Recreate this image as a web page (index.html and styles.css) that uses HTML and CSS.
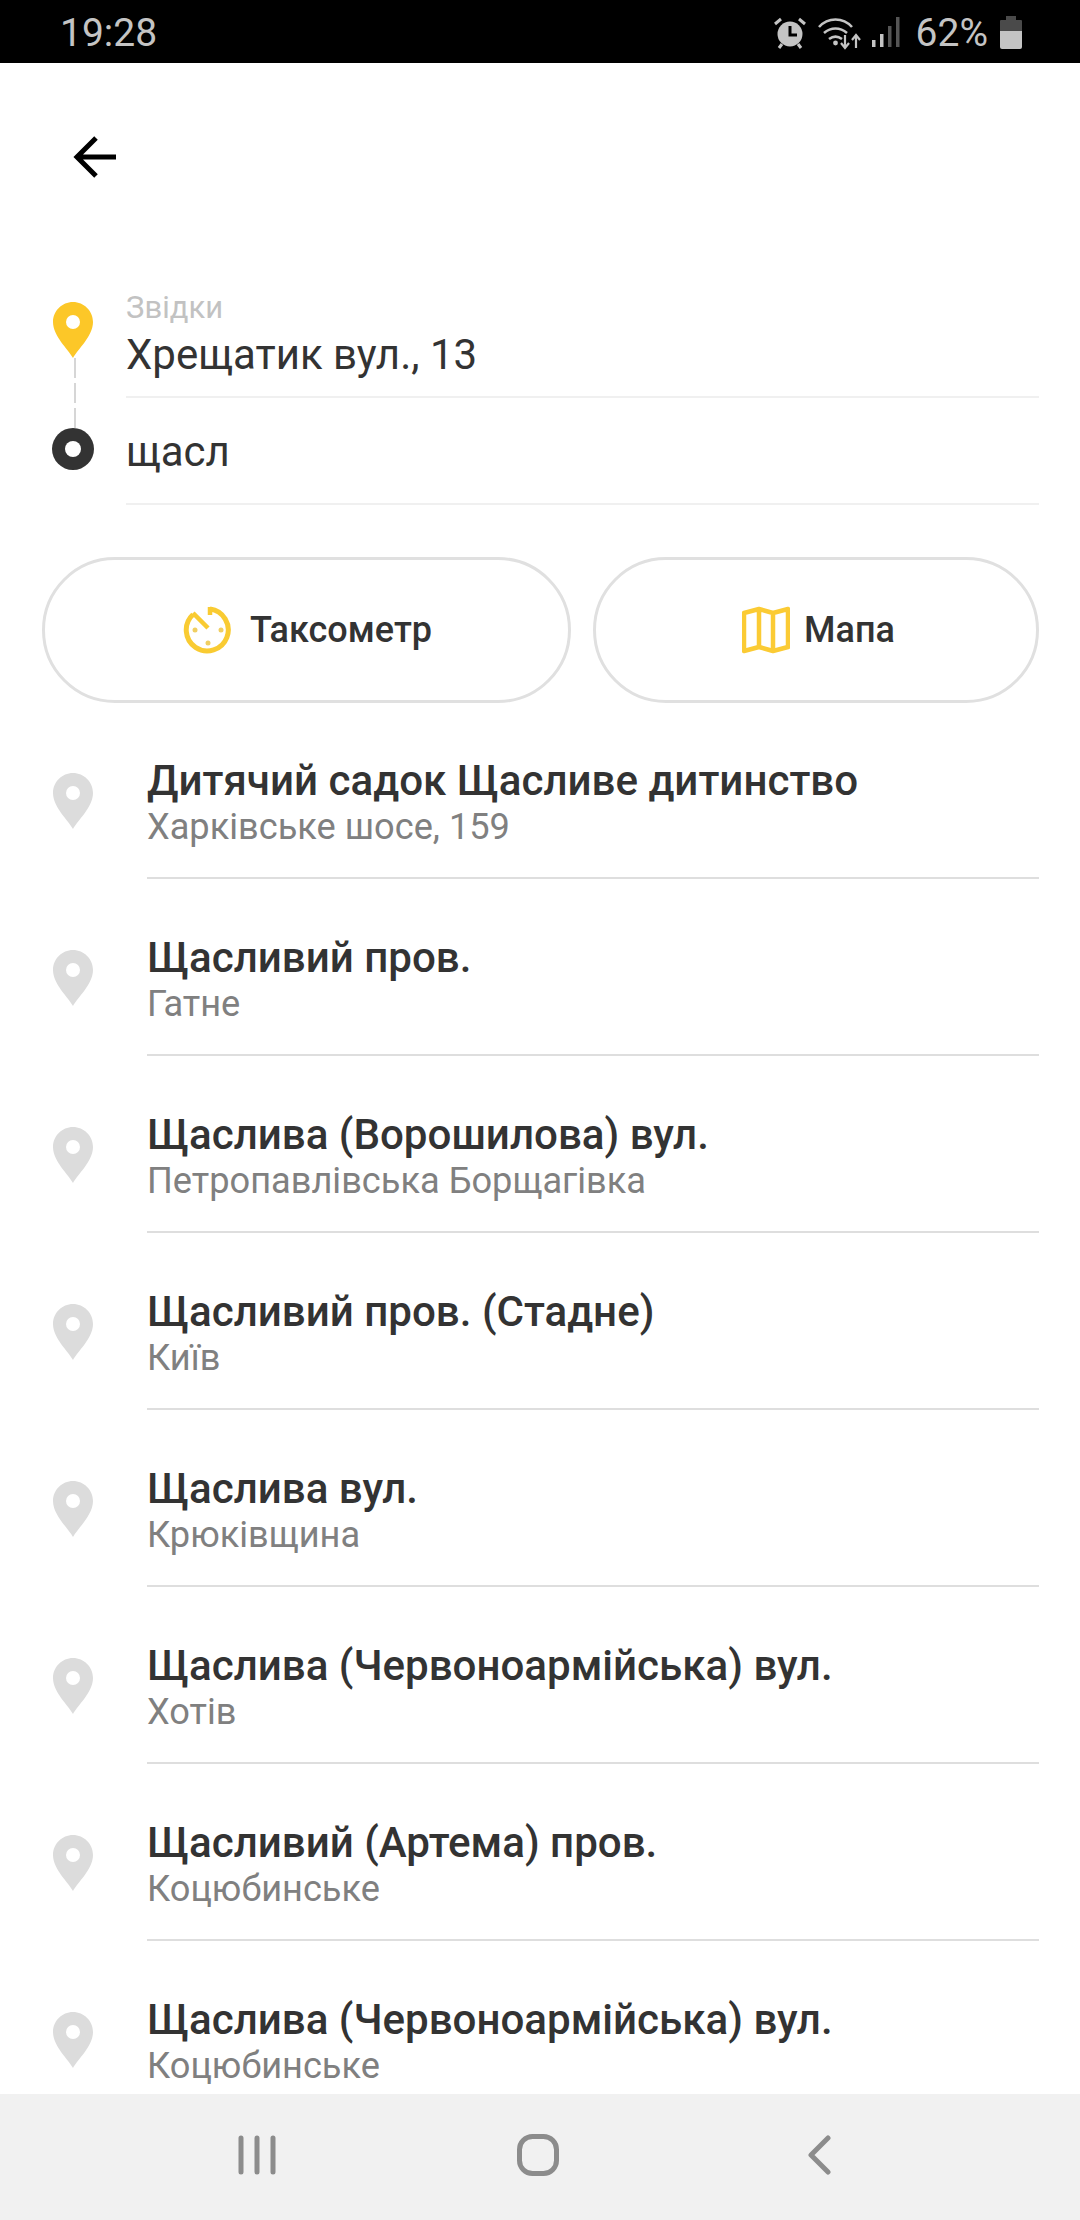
FILE: index.html
```html
<!DOCTYPE html>
<html lang="uk">
<head>
<meta charset="utf-8" />
<title>Маршрут</title>
<link rel="stylesheet" href="styles.css">
</head>
<body>
<div class="statusBar">
  <span class="time">19:28</span>
  <div class="statusIcons">
    <svg class="alarmIcon" width="34" height="34" viewBox="0 0 34 34">
      <circle cx="17" cy="18" r="12.500" fill="#c4c4c4"/>
      <path d="M17 10v9h7" fill="none" stroke="#000" stroke-width="3"/>
      <path d="M2 8l6-5M32 8l-6-5M6 32l3-4M28 32l-3-4" stroke="#c4c4c4" stroke-width="3" fill="none"/>
    </svg>
    <svg class="wifiIcon" width="44" height="34" viewBox="0 0 44 34">
      <path d="M2 11C11 1 26 1 35 11M7 17c7-6 16-6 23 0M12 23c4-3 9-3 13 0" fill="none" stroke="#c4c4c4" stroke-width="2.600"/>
      <circle cx="18.500" cy="27" r="2.400" fill="#c4c4c4"/>
      <path d="M28 19v12M24 27l4 5 4-5M39 32V20M35 24l4-5 4 5" fill="none" stroke="#c4c4c4" stroke-width="2.200"/>
    </svg>
    <svg class="signalIcon" width="28" height="32" viewBox="0 0 28 32">
      <rect x="0" y="23" width="3.500" height="7" fill="#c4c4c4"/>
      <rect x="8" y="17" width="3.500" height="13" fill="#c4c4c4"/>
      <rect x="16" y="9" width="3.500" height="21" fill="#555"/>
      <rect x="24" y="0" width="3.500" height="30" fill="#555"/>
    </svg>
    <span class="battery">62%</span>
    <svg class="batteryIcon" width="22" height="33" viewBox="0 0 22 33">
      <path d="M6 0h10v4h5a1 1 0 0 1 1 1v10H0V5a1 1 0 0 1 1-1h5z" fill="#4a4a4a"/>
      <path d="M0 15h22v16a2 2 0 0 1-2 2H2a2 2 0 0 1-2-2z" fill="#c4c4c4"/>
    </svg>
  </div>
</div>

<div class="content">
  <div class="topBar">
    <svg width="46" height="44" viewBox="0 0 46 44">
      <path d="M44 22H5M24 3L5 22l19 19" fill="none" stroke="#000" stroke-width="5"/>
    </svg>
  </div>

  <div class="route">
    <svg class="routeIcons" width="44" height="170" viewBox="-1 0 44 170">
      <path d="M22 56V126" stroke="#c9c9c9" stroke-width="1.500" stroke-dasharray="20 5" fill="none"/>
      <path d="M20 0C9 0 0 9 0 20c0 14 15 27 20 36 5-9 20-22 20-36C40 9 31 0 20 0z" fill="#fcc728"/>
      <circle cx="20" cy="20" r="7" fill="#fff"/>
      <circle cx="20" cy="147" r="21" fill="#333"/>
      <circle cx="20" cy="147" r="8" fill="#fff"/>
    </svg>
    <div class="fields">
      <div class="field fieldFrom">
        <div class="fieldLabel">Звідки</div>
        <div class="fieldValue">Хрещатик вул., 13</div>
      </div>
      <div class="field fieldTo">
        <div class="fieldValue">щасл</div>
      </div>
    </div>
  </div>

  <div class="actions">
    <div class="actionBtn taxBtn">
      <svg width="50" height="50" viewBox="0 0 50 50">
        <path d="M27 4.100A21 21 0 1 1 10 9.500" fill="none" stroke="#f9cb32" stroke-width="5"/>
        <path d="M10 8l15 15M27 2v8" fill="none" stroke="#f9cb32" stroke-width="4.500"/>
        <circle cx="12" cy="25" r="2.500" fill="#f0cf62"/>
        <circle cx="38" cy="25" r="2.500" fill="#f0cf62"/>
        <circle cx="25" cy="38" r="2.500" fill="#f0cf62"/>
      </svg>
      <span>Таксометр</span>
    </div>
    <div class="actionBtn mapBtn">
      <svg width="48" height="48" viewBox="0 0 48 48">
        <path d="M2 7l15-4 14 4 15-4v38l-15 4-14-4-15 4zM17 3v38M31 7v38" fill="none" stroke="#fbcb34" stroke-width="4.500" stroke-linejoin="round"/>
      </svg>
      <span>Мапа</span>
    </div>
  </div>

  <div class="results">
    <div class="resultRow">
      <svg class="pin" width="40" height="56" viewBox="0 0 40 56"><path d="M20 0C9 0 0 9 0 20c0 14 15 27 20 36 5-9 20-22 20-36C40 9 31 0 20 0z" fill="#dcdcdc"/><circle cx="20" cy="20" r="7" fill="#fff"/></svg>
      <div class="resultText"><div class="resultTitle">Дитячий садок Щасливе дитинство</div><div class="resultSub">Харківське шосе, 159</div></div>
    </div>
    <div class="resultRow">
      <svg class="pin" width="40" height="56" viewBox="0 0 40 56"><path d="M20 0C9 0 0 9 0 20c0 14 15 27 20 36 5-9 20-22 20-36C40 9 31 0 20 0z" fill="#dcdcdc"/><circle cx="20" cy="20" r="7" fill="#fff"/></svg>
      <div class="resultText"><div class="resultTitle">Щасливий пров.</div><div class="resultSub">Гатне</div></div>
    </div>
    <div class="resultRow">
      <svg class="pin" width="40" height="56" viewBox="0 0 40 56"><path d="M20 0C9 0 0 9 0 20c0 14 15 27 20 36 5-9 20-22 20-36C40 9 31 0 20 0z" fill="#dcdcdc"/><circle cx="20" cy="20" r="7" fill="#fff"/></svg>
      <div class="resultText"><div class="resultTitle">Щаслива (Ворошилова) вул.</div><div class="resultSub">Петропавлівська Борщагівка</div></div>
    </div>
    <div class="resultRow">
      <svg class="pin" width="40" height="56" viewBox="0 0 40 56"><path d="M20 0C9 0 0 9 0 20c0 14 15 27 20 36 5-9 20-22 20-36C40 9 31 0 20 0z" fill="#dcdcdc"/><circle cx="20" cy="20" r="7" fill="#fff"/></svg>
      <div class="resultText"><div class="resultTitle">Щасливий пров. (Стадне)</div><div class="resultSub">Київ</div></div>
    </div>
    <div class="resultRow">
      <svg class="pin" width="40" height="56" viewBox="0 0 40 56"><path d="M20 0C9 0 0 9 0 20c0 14 15 27 20 36 5-9 20-22 20-36C40 9 31 0 20 0z" fill="#dcdcdc"/><circle cx="20" cy="20" r="7" fill="#fff"/></svg>
      <div class="resultText"><div class="resultTitle">Щаслива вул.</div><div class="resultSub">Крюківщина</div></div>
    </div>
    <div class="resultRow">
      <svg class="pin" width="40" height="56" viewBox="0 0 40 56"><path d="M20 0C9 0 0 9 0 20c0 14 15 27 20 36 5-9 20-22 20-36C40 9 31 0 20 0z" fill="#dcdcdc"/><circle cx="20" cy="20" r="7" fill="#fff"/></svg>
      <div class="resultText"><div class="resultTitle">Щаслива (Червоноармійська) вул.</div><div class="resultSub">Хотів</div></div>
    </div>
    <div class="resultRow">
      <svg class="pin" width="40" height="56" viewBox="0 0 40 56"><path d="M20 0C9 0 0 9 0 20c0 14 15 27 20 36 5-9 20-22 20-36C40 9 31 0 20 0z" fill="#dcdcdc"/><circle cx="20" cy="20" r="7" fill="#fff"/></svg>
      <div class="resultText"><div class="resultTitle">Щасливий (Артема) пров.</div><div class="resultSub">Коцюбинське</div></div>
    </div>
    <div class="resultRow">
      <svg class="pin" width="40" height="56" viewBox="0 0 40 56"><path d="M20 0C9 0 0 9 0 20c0 14 15 27 20 36 5-9 20-22 20-36C40 9 31 0 20 0z" fill="#dcdcdc"/><circle cx="20" cy="20" r="7" fill="#fff"/></svg>
      <div class="resultText"><div class="resultTitle">Щаслива (Червоноармійська) вул.</div><div class="resultSub">Коцюбинське</div></div>
    </div>
  </div>
</div>

<div class="navBar">
  <svg class="navRecents" width="38" height="40" viewBox="0 0 38 40">
    <path d="M3 3v34M19 3v34M35 3v34" stroke="#8c8c8c" stroke-width="5" stroke-linecap="round" fill="none"/>
  </svg>
  <svg class="navHome" width="42" height="42" viewBox="0 0 42 42">
    <rect x="2.500" y="2.500" width="37" height="37" rx="13" fill="none" stroke="#8c8c8c" stroke-width="5"/>
  </svg>
  <svg class="navBack" width="23" height="40" viewBox="0 0 23 40">
    <path d="M20 3L3 20l17 17" stroke="#8c8c8c" stroke-width="5" stroke-linecap="round" stroke-linejoin="round" fill="none"/>
  </svg>
</div>
</body>
</html>
```

FILE: styles.css
```css
html, body {
  margin:0; padding:0; height:100%;
}
body {
  width:1080px; height:2220px; overflow:hidden; background:#fff; color:#333;
  font-family: Roboto, "Noto Sans", sans-serif;
  display:flex; flex-direction:column;
}
.statusBar {
  flex:none; height:63px; background:#000; color:#c4c4c4;
  display:flex; align-items:center; justify-content:space-between;
  padding:2px 58px 0 60px; font-size:39px; box-sizing:border-box;
}
.statusIcons {
  display:flex; align-items:center;
}
.alarmIcon { margin-right:10px; }
.wifiIcon { margin-right:11px; }
.signalIcon { margin-right:16px; }
.battery { margin-right:12px; }

.content {
  flex:1; min-height:0; overflow:hidden;
}
.topBar {
  height:219px; box-sizing:border-box; padding:72px 0 0 72px;
}
.topBar svg { display:block; }

.route {
  display:flex; padding-left:52px;
}
.routeIcons {
  flex:none; margin-top:20px; margin-right:30px;
}
.fields {
  flex:1; margin-right:41px;
}
.field {
  border-bottom:2px solid #f0f0f0; box-sizing:border-box;
}
.fieldFrom {
  height:116px; padding-top:9px;
}
.fieldFrom .fieldValue {
  margin-top:7px;
}
.fieldTo {
  height:107px; padding-top:31px;
}
.fieldLabel {
  font-size:31px; line-height:34px; color:#c2c2c2;
}
.fieldValue {
  font-size:42px; line-height:46px; color:#333;
}

.actions {
  display:flex; gap:22px; margin:52px 41px 0 42px;
}
.actionBtn {
  height:146px; box-sizing:border-box; border:3px solid #e0e0e0; border-radius:73px;
  display:flex; align-items:center; justify-content:center;
  font-size:36px; font-weight:500; color:#333;
}
.actionBtn svg { flex:none; }
.taxBtn { width:529px; gap:17px; padding-left:2px; }
.mapBtn { width:446px; gap:14px; padding-left:5px; }

.resultRow {
  display:flex; height:177px; padding:0 0 1px 53px; box-sizing:border-box;
}
.pin {
  flex:none; margin-top:70px; margin-right:54px;
}
.resultText {
  flex:1; margin-right:41px; padding-top:54px; box-sizing:border-box;
  border-bottom:2px solid #dedede;
}
.resultTitle {
  font-size:42.100px; line-height:48px; font-weight:500; color:#333;
}
.resultSub {
  font-size:36.200px; line-height:42px; margin-top:1px; color:#808080;
}

.navBar {
  flex:none; height:126px; background:#f1f1f1;
  display:flex; align-items:center;
  padding:0 0 4px 238px; box-sizing:border-box;
}
.navHome { margin-left:241px; }
.navBack { margin-left:249px; }
```
